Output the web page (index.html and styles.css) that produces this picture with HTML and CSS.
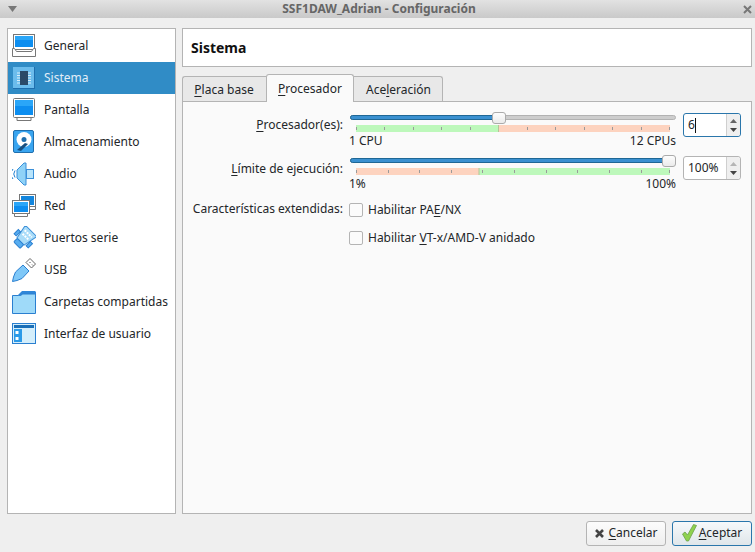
FILE: index.html
```html
<!DOCTYPE html>
<html lang="es">
<head>
<meta charset="utf-8">
<title>SSF1DAW_Adrian - Configuración</title>
<link rel="stylesheet" href="styles.css">
</head>
<body>
<div class="window">
  <header class="titlebar">
    <svg class="tb-menu" width="9" height="6" viewBox="0 0 9 6"><path d="M0 0h9L4.500 6z" fill="#777"/></svg>
    <span class="tb-title">SSF1DAW_Adrian - Configuración</span>
    <svg class="tb-close" width="9" height="9" viewBox="0 0 9 9"><path d="M1 1l7 7M8 1L1 8" stroke="#777" stroke-width="2"/></svg>
  </header>
  <div class="main">
    <nav class="sidebar">
      <div class="item">
        <svg class="ico" width="24" height="24" viewBox="0 0 24 24"><rect x="1.500" y="0.500" width="21" height="15" fill="#fff" stroke="#777"/><rect x="3" y="2" width="18" height="11" fill="#0d8ef0"/><rect x="3" y="2" width="18" height="4" fill="#2aa6f8"/><path d="M0.500 14.500h2l2 3h15l2-3h2v8h-23z" fill="#fff" stroke="#777"/></svg>
        <span>General</span>
      </div>
      <div class="item sel">
        <svg class="ico" width="24" height="24" viewBox="0 0 24 24"><rect x="1" y="1" width="22" height="22" fill="#1f6fae"/><rect x="1" y="1" width="21" height="21" fill="#6bbcec"/><path d="M5 7h14M5 9.500h14M5 12h14M5 14.500h14M5 17h14" stroke="#d8eefa"/><rect x="8" y="5" width="8" height="14" fill="#2b4a68"/></svg>
        <span>Sistema</span>
      </div>
      <div class="item">
        <svg class="ico" width="24" height="24" viewBox="0 0 24 24"><rect x="1.500" y="0.500" width="21" height="19" rx="1" fill="#fff" stroke="#777"/><rect x="3" y="2" width="18" height="15" fill="#0d8ef0"/><rect x="3" y="2" width="18" height="6" fill="#2aa6f8"/><path d="M5 19.500h14v3H5z" fill="#fff" stroke="#777"/></svg>
        <span>Pantalla</span>
      </div>
      <div class="item">
        <svg class="ico" width="24" height="24" viewBox="0 0 24 24"><rect x="1.500" y="0.500" width="20" height="22" rx="1.500" fill="#39a5f0" stroke="#1f6fae"/><circle cx="12" cy="9.500" r="7.500" fill="#fff"/><circle cx="12" cy="9.500" r="2.500" fill="#1f6fae"/><path d="M5 20l8-7 3 1-7 7z" fill="#174f80"/></svg>
        <span>Almacenamiento</span>
      </div>
      <div class="item">
        <svg class="ico" width="24" height="24" viewBox="0 0 24 24"><path d="M3 8.500a6 6 0 0 0 0 7M1 7a8 8 0 0 0 0 10" fill="none" stroke="#1f7fd0"/><path d="M5 8l7-7h2v22h-2l-7-7z" fill="#8fd2f7" stroke="#3a8fd8"/><rect x="14.500" y="7.500" width="7" height="9" fill="#b8e4fb" stroke="#3a8fd8"/></svg>
        <span>Audio</span>
      </div>
      <div class="item">
        <svg class="ico" width="24" height="24" viewBox="0 0 24 24"><rect x="7.500" y="0.500" width="16" height="12" fill="#fff" stroke="#777"/><rect x="9" y="2" width="13" height="9" fill="#1386dd"/><path d="M17.500 12.500h6v3h-6z" fill="#fff" stroke="#777"/><rect x="0.500" y="6.500" width="17" height="13" fill="#fff" stroke="#777"/><rect x="2" y="8" width="14" height="10" fill="#0d8ef0"/><rect x="2" y="8" width="14" height="4" fill="#2aa6f8"/><path d="M2.500 19.500h13v3h-13z" fill="#fff" stroke="#777"/></svg>
        <span>Red</span>
      </div>
      <div class="item">
        <svg class="ico" width="24" height="24" viewBox="0 0 24 24"><g transform="rotate(45 12 12)"><path d="M4 2h16l-3 15H7z" fill="#a9dcf9" stroke="#3a8fd8"/><path d="M7 6h10M8 10h8" stroke="#fff" stroke-width="2" stroke-dasharray="2 1"/><rect x="2" y="10" width="3" height="6" fill="#57adf0" stroke="#2a7fd0"/><rect x="19" y="10" width="3" height="6" fill="#57adf0" stroke="#2a7fd0"/><rect x="7.500" y="17" width="9" height="5" rx="1" fill="#57adf0" stroke="#2a7fd0"/></g></svg>
        <span>Puertos serie</span>
      </div>
      <div class="item">
        <svg class="ico" width="24" height="24" viewBox="0 0 24 24"><path d="M0.500 23.500l1-4.500 2-5L11 7l6 6-7 7.500-5 2z" fill="#7fc8f8" stroke="#2a7fd0"/><path d="M14 4.500l4-4 5.500 5.500-4 4z" fill="#fff" stroke="#666"/><path d="M17.500 4l1 1M20 6.500l1 1" stroke="#555"/></svg>
        <span>USB</span>
      </div>
      <div class="item">
        <svg class="ico" width="24" height="24" viewBox="0 0 24 24"><path d="M6 5l4-4h13l1 1v6H6z" fill="#2f86d8"/><path d="M0.500 5.500h6c2 0 3 0 4-1.500h13v19.500H0.500z" fill="#9fdaf9" stroke="#2a7fd0"/></svg>
        <span>Carpetas compartidas</span>
      </div>
      <div class="item">
        <svg class="ico" width="24" height="24" viewBox="0 0 24 24"><rect x="0.500" y="1.500" width="23" height="20" fill="#d4eefb" stroke="#2a7fd0"/><rect x="2" y="3" width="20" height="3" fill="#1a6fb8"/><rect x="2" y="7" width="8" height="13" fill="#2b9ae8"/><rect x="3.500" y="9" width="3" height="3" fill="#fff"/><rect x="3.500" y="15" width="3" height="3" fill="#fff"/></svg>
        <span>Interfaz de usuario</span>
      </div>
    </nav>
    <section class="content">
      <h1 class="heading">Sistema</h1>
      <div class="tabs">
        <div class="tab first"><u>P</u>laca base</div>
        <div class="tab active"><u>P</u>rocesador</div>
        <div class="tab last">Ace<u>l</u>eración</div>
      </div>
      <div class="panel">
        <div class="row row-cpu">
          <label class="lbl"><u>P</u>rocesador(es):</label>
          <div class="sliderbox">
            <div class="track"><div class="fill fill-cpu"></div><div class="handle"></div></div>
            <svg class="band" width="314" height="7" viewBox="0 0 314 7">
              <rect width="142" height="7" fill="#bdf8bb"/><rect x="142" width="172" height="7" fill="#fdd3bf"/>
              <path d="M.5 2v3M28.500 2v3M57.500 2v3M85.500 2v3M114.500 2v3M171.500 2v3M199.500 2v3M228.500 2v3M256.500 2v3M285.500 2v3M313.500 2v3" stroke="#9a9a9a"/>
              <path d="M142.500 0v7" stroke="#b5c49a"/>
            </svg>
            <div class="ends"><span>1 CPU</span><span>12 CPUs</span></div>
          </div>
          <div class="spin focus">
            <div class="spin-val">6<i class="caret"></i></div>
            <div class="spin-btns"><svg width="7" height="4" viewBox="0 0 7 4"><path d="M0 4h7L3.500 0z" fill="#666"/></svg><svg width="7" height="4" viewBox="0 0 7 4"><path d="M0 0h7L3.500 4z" fill="#444"/></svg></div>
          </div>
        </div>
        <div class="row row-lim">
          <label class="lbl"><u>L</u>ímite de ejecución:</label>
          <div class="sliderbox">
            <div class="track"><div class="fill fill-lim"></div><div class="handle"></div></div>
            <svg class="band" width="314" height="7" viewBox="0 0 314 7">
              <rect width="123" height="7" fill="#fdd3bf"/><rect x="123" width="191" height="7" fill="#bdf8bb"/>
              <path d="M.5 2v3M32.500 2v3M63.500 2v3M95.500 2v3M126.500 2v3M158.500 2v3M190.500 2v3M221.500 2v3M253.500 2v3M285.500 2v3M313.500 2v3" stroke="#9a9a9a"/>
              <path d="M123 0v7" stroke="#b5c49a"/>
            </svg>
            <div class="ends"><span>1%</span><span>100%</span></div>
          </div>
          <div class="spin">
            <div class="spin-val">100%</div>
            <div class="spin-btns"><svg width="7" height="4" viewBox="0 0 7 4"><path d="M0 4h7L3.500 0z" fill="#b5b5b5"/></svg><svg width="7" height="4" viewBox="0 0 7 4"><path d="M0 0h7L3.500 4z" fill="#444"/></svg></div>
          </div>
        </div>
        <div class="row row-chk">
          <label class="lbl">Características extendidas:</label>
          <div class="check"><i class="box"></i><span>Habilitar PA<u>E</u>/NX</span></div>
        </div>
        <div class="row row-chk2">
          <span class="lbl"></span>
          <div class="check"><i class="box"></i><span>Habilitar <u>V</u>T-x/AMD-V anidado</span></div>
        </div>
      </div>
    </section>
  </div>
  <footer class="footer">
    <button class="btn">
      <svg width="11" height="11" viewBox="0 0 11 11"><path d="M2 2l7 7M9 2L2 9" stroke="#444" stroke-width="2.600"/></svg>
      <span><u>C</u>ancelar</span>
    </button>
    <button class="btn default">
      <svg width="15" height="18" viewBox="0 0 15 18"><path d="M0.500 10l2.500-2 2.500 3L11.500 0.500l3 1-8 15.500H4.500z" fill="#8fd24f" stroke="#6a9f4a" stroke-width=".8"/></svg>
      <span><u>A</u>ceptar</span>
    </button>
  </footer>
</div>
</body>
</html>
```

FILE: styles.css
```css
* { box-sizing: border-box; }
html, body { margin: 0; padding: 0; }
body {
  width: 755px;
  height: 552px;
  overflow: hidden;
  background: #efefef;
  font-family: "Noto Sans", "Open Sans", sans-serif;
  font-size: 12px;
  line-height: 16px;
  color: #232629;
}
u { text-decoration-thickness: 1px; text-underline-offset: 2px; }
.window { display: flex; flex-direction: column; height: 552px; }

.titlebar {
  height: 18px;
  display: flex;
  align-items: center;
  justify-content: space-between;
  padding: 0 3px 0 8px;
  background: linear-gradient(#e2e2e2, #c9c9c9);
}
.tb-title { font-weight: 700; color: #666; margin-right: 2px; }

.main { display: flex; gap: 6px; padding: 10px 3px 0 7px; height: 496px; }
.sidebar {
  width: 169px;
  height: 486px;
  padding: 1px 0 0;
  background: #fff;
  border: 1px solid #b4b4b4;
  flex: none;
}
.item {
  height: 32px;
  display: flex;
  align-items: center;
  gap: 8px;
  padding-left: 4px;
}
.item .ico { flex: none; }
.item.sel { background: #308cc6; color: #e2eef8; }

.content { flex: 1; display: flex; flex-direction: column; min-width: 0; }
.heading {
  height: 39px;
  margin: 0;
  padding: 1px 8px 0;
  display: flex;
  align-items: center;
  background: #fff;
  border: 1px solid #b4b4b4;
  font-size: 14px;
  font-weight: 700;
  color: #111;
}
.tabs { display: flex; height: 27px; margin-top: 7px; position: relative; z-index: 1; align-items: flex-end; }
.tab {
  height: 25px;
  padding-top: 5px;
  text-align: center;
  background: #e8e8e8;
  border: 1px solid #b4b4b4;
  border-bottom: 0;
}
.tab.first { width: 84px; padding-right: 1px; border-right: 0; border-radius: 3px 0 0 0; }
.tab.active {
  width: 88px;
  height: 28px;
  background: #fafafa;
  padding-top: 6px;
  margin-bottom: -1px;
  border-radius: 3px 3px 0 0;
}
.tab.last { width: 89px; padding-left: 1px; border-left: 0; border-radius: 0 3px 0 0; }

.panel {
  height: 413px;
  background: #fafafa;
  border: 1px solid #b4b4b4;
  padding: 12px 10px 0 8px;
  display: flex;
  flex-direction: column;
}
.row { display: flex; }
.row-cpu { height: 43px; }
.row-lim { height: 42px; }
.lbl { width: 152px; white-space: nowrap; text-align: right; flex: none; padding-top: 3px; }
.row-lim .lbl { padding-top: 4px; }
.sliderbox { width: 326px; margin-left: 7px; flex: none; display: flex; flex-direction: column; }
.track {
  position: relative;
  height: 5px;
  margin-top: 1px;
  border-radius: 3px;
  background: #cdcdcd;
  border: 1px solid #b2b2b2;
}
.fill { height: 5px; margin: -1px; background: #3a90d0; border: 1px solid #1f6795; border-radius: 3px 0 0 3px; }
.fill-cpu { width: 148px; }
.fill-lim { width: 322px; }
.handle {
  position: absolute;
  top: -4px;
  width: 14px;
  height: 12px;
  background: linear-gradient(#fdfdfd, #ebebeb);
  border: 1px solid #ababab;
  border-radius: 3px;
}
.row-cpu .handle { left: 141px; }
.row-lim .handle { right: -1px; }
.band { display: block; margin: 5px 0 0 6px; }
.ends { display: flex; justify-content: space-between; margin: 1px 0 0 -1px; }
.spin {
  width: 58px;
  height: 24px;
  margin: -1px 0 0 7px;
  flex: none;
  display: flex;
  background: #fff;
  border: 1px solid #b4b4b4;
  border-radius: 3px;
}
.spin.focus { border-color: #2a76ab; }
.spin-val { flex: 1; padding: 3px 0 0 4px; display: flex; }
.caret { display: block; width: 1px; height: 15px; margin-top: 1px; background: #111; }
.spin-btns {
  width: 14px;
  flex: none;
  display: flex;
  flex-direction: column;
  align-items: center;
  justify-content: center;
  gap: 5px;
  background: #efefef;
  border-left: 1px solid #cfcfcf;
  border-radius: 0 3px 3px 0;
}
.spin-btns svg { display: block; }
.row-chk { height: 28px; }
.row-chk2 { height: 24px; }
.row-chk .lbl { padding-top: 2px; }
.row-chk2 .lbl { padding: 0; }
.check { display: flex; align-items: center; gap: 5px; margin-left: 6px; height: 22px; }
.box {
  display: block;
  width: 14px;
  height: 14px;
  background: #fbfbfb;
  border: 1px solid #b4b4b4;
  border-radius: 2px;
}

.footer { display: flex; justify-content: flex-end; gap: 6px; padding: 7px 3px 0 0; }
.btn {
  width: 80px;
  height: 25px;
  display: flex;
  align-items: center;
  justify-content: center;
  gap: 3px;
  padding: 0 0 1px;
  font: inherit;
  color: inherit;
  background: linear-gradient(#fcfcfc, #eeeeee);
  border: 1px solid #b4b4b4;
  border-radius: 3px;
}
.btn.default { gap: 2px; border-color: #2a76ab; background: linear-gradient(#f6f9fb, #dfe6ea); }
```
